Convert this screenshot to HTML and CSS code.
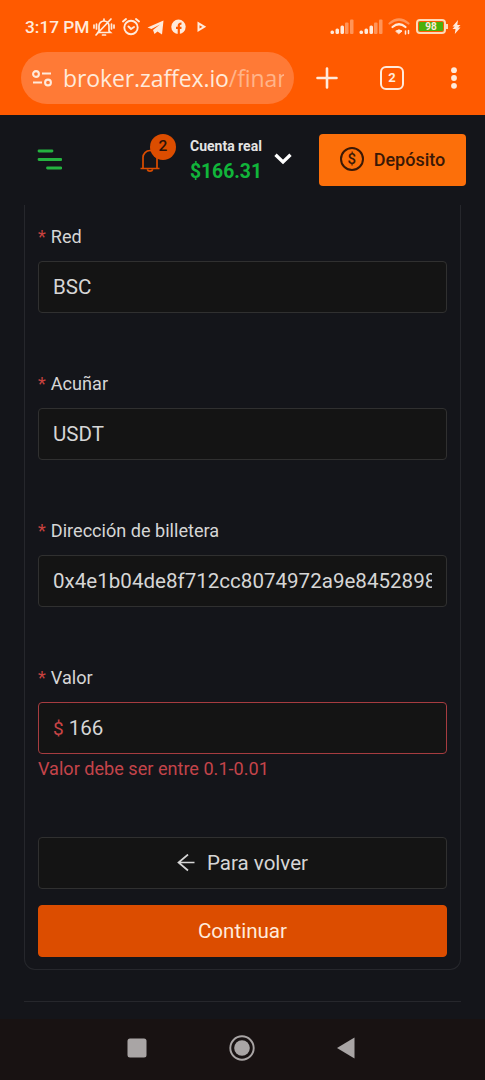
FILE: index.html
```
<!DOCTYPE html>
<html lang="es">
<head>
  <meta charset="UTF-8">
  <meta name="viewport" content="width=device-width, initial-scale=1.0">
  <title>Zaffex</title>
  <link rel="stylesheet" href="styles.css">
</head>
<body>
  <div class="browser">
    <div class="statusbar">
      <span class="time">3:17 PM</span>
      <div class="status-left">
        <svg width="22" height="20" viewBox="0 0 22 20" fill="none" stroke="currentColor" stroke-width="1.7" stroke-linecap="round">
          <path d="M6 14V9a5 5 0 0 1 10 0v5l1.500 1.500H5z M9.500 18h3 M11 2v2 M3 18L18 2 M3.500 7v5 M1 8v3 M18.500 7v5 M21 8v3"/>
        </svg>
        <svg width="18" height="20" viewBox="0 0 18 20" fill="none" stroke="currentColor" stroke-width="1.9" stroke-linecap="round">
          <circle cx="9" cy="10.500" r="6.700"/>
          <path d="M1 4.500l3-2.500 M17 4.500l-3-2.500 M6.500 9.500L9 12l3-2"/>
        </svg>
        <svg width="17" height="20" viewBox="0 0 17 20" fill="currentColor">
          <path d="M0.500 10.500L16.500 3.500l-1.500 14-4.500-3-3 2.500-1.500-4L13 7.500l-8.500 4.500z"/>
        </svg>
        <svg width="15" height="20" viewBox="0 0 15 20">
          <circle cx="7.500" cy="9.800" r="7.200" fill="currentColor"/>
          <path d="M7.800 17.500v-9q0-2 2.700-1.800 M5 10.800h5.500" fill="none" stroke="#ff5a00" stroke-width="2.200"/>
        </svg>
        <svg class="play" width="10" height="20" viewBox="0 0 10 20" fill="none" stroke="currentColor" stroke-width="2">
          <path d="M1.500 6.300v7L7.300 9.800z"/>
        </svg>
      </div>
      <div class="status-right">
        <svg width="24" height="20" viewBox="0 0 24 20" fill="currentColor">
          <rect x="0.500" y="13.500" width="3.500" height="3.500" rx="1.500"/>
          <rect x="5.500" y="11.500" width="3.500" height="5.500" rx="1.500"/>
          <rect x="10.500" y="8.500" width="3.500" height="8.500" rx="1.500"/>
          <rect class="dim" x="15" y="5.500" width="3.500" height="11.500" rx="1"/>
          <rect class="dim" x="20" y="2.500" width="3.500" height="14.500" rx="1"/>
        </svg>
        <svg width="24" height="20" viewBox="0 0 24 20" fill="currentColor">
          <rect x="0.500" y="13.500" width="3.500" height="3.500" rx="1.500"/>
          <rect x="5.500" y="11.500" width="3.500" height="5.500" rx="1.500"/>
          <rect x="10.500" y="8.500" width="3.500" height="8.500" rx="1.500"/>
          <rect class="dim" x="15" y="5.500" width="3.500" height="11.500" rx="1"/>
          <rect class="dim" x="20" y="2.500" width="3.500" height="14.500" rx="1"/>
        </svg>
        <svg width="22" height="20" viewBox="0 0 22 20" fill="none" stroke="currentColor" stroke-width="2.200" stroke-linecap="round">
          <path class="dim" d="M1.500 6.500q9.500-8 19 0"/>
          <path d="M4.500 10q6.500-5.500 13 0"/>
          <path d="M8 14q3-2.500 6 0l-3 2.500z" fill="currentColor" stroke-width="1"/>
          <path d="M17.500 14v3 M20.500 13.500v3" stroke-width="1.500"/>
        </svg>
        <div class="battery">98</div>
        <svg class="bolt" width="9" height="20" viewBox="0 0 9 20" fill="currentColor">
          <path d="M6 3L0.500 9.500h2.300L0.500 12h3l-0.700 5L8.500 10.500H6l2.500-2.500H5.300z"/>
        </svg>
      </div>
    </div>
    <div class="toolbar">
      <div class="urlbar">
        <svg width="20" height="18" viewBox="0 0 20 18" fill="none" stroke="currentColor" stroke-width="2.100">
          <circle cx="4" cy="5" r="2.900"/>
          <path d="M10 4.500h9 M1 13.500h9"/>
          <circle cx="16" cy="13.500" r="2.900"/>
        </svg>
        <div class="url">broker.zaffex.io<span class="path">/finance</span></div>
      </div>
      <svg class="plus" width="22" height="22" viewBox="0 0 22 22" stroke="currentColor" stroke-width="2.600" stroke-linecap="round">
        <path d="M11 1.500v19 M1.500 11h19"/>
      </svg>
      <div class="tabs">2</div>
      <svg class="dots" width="6" height="22" viewBox="0 0 6 22" fill="currentColor">
        <circle cx="3" cy="3.200" r="2.900"/>
        <circle cx="3" cy="11" r="2.900"/>
        <circle cx="3" cy="18.800" r="2.900"/>
      </svg>
    </div>
  </div>

  <header class="header">
    <svg class="menu" width="26" height="22" viewBox="0 0 26 22" stroke="currentColor" stroke-width="2.800" stroke-linecap="round">
      <path d="M3 2h13 M3 10.500h22 M11.500 19h13.500"/>
    </svg>
    <div class="bell">
      <svg width="20" height="26" viewBox="0 0 20 26" fill="none" stroke="currentColor" stroke-width="1.700">
        <path d="M0.500 21.500h19 M3 21.500V10.500a7 7 0 0 1 14 0v11 M7.300 22.500a2.800 2.300 0 0 0 5.400 0"/>
      </svg>
      <span class="badge">2</span>
    </div>
    <div class="account">
      <span class="account-name">Cuenta real</span>
      <span class="balance">$166.31</span>
    </div>
    <svg class="chevron" width="18" height="12" viewBox="0 0 18 12" fill="none" stroke="currentColor" stroke-width="3.300">
      <path d="M1.500 1.800L9 9l7.500-7.200"/>
    </svg>
    <button class="deposit">
      <span class="coin">$</span>
      Depósito
    </button>
  </header>

  <main class="main">
    <form class="card">
      <div class="field">
        <label for="network">Red</label>
        <input type="text" id="network" value="BSC">
      </div>
      <div class="field">
        <label for="coin">Acuñar</label>
        <input type="text" id="coin" value="USDT">
      </div>
      <div class="field">
        <label for="wallet">Dirección de billetera</label>
        <input type="text" id="wallet" value="0x4e1b04de8f712cc8074972a9e8452898">
      </div>
      <div class="field">
        <label for="amount">Valor</label>
        <div class="amount-box">
          <span class="currency">$</span>
          <input type="text" id="amount" value="166">
        </div>
        <p class="error">Valor debe ser entre 0.1-0.01</p>
      </div>
      <div class="actions">
        <button type="button" class="btn btn-back">
          <svg width="18" height="18" viewBox="0 0 18 18" fill="none" stroke="currentColor" stroke-width="1.700">
            <path d="M17.500 8.500H1.500 M11 0.500L1.500 8.500l9.500 8"/>
          </svg>
          Para volver
        </button>
        <button type="button" class="btn btn-next">Continuar</button>
      </div>
    </form>
    <hr class="divider">
  </main>

  <nav class="navbar">
    <svg width="20" height="20" viewBox="0 0 20 20" fill="currentColor">
      <rect x="0.500" y="0.500" width="19" height="19" rx="2.500"/>
    </svg>
    <svg width="26" height="26" viewBox="0 0 26 26">
      <circle cx="13" cy="13" r="11.700" fill="none" stroke="currentColor" stroke-width="1.900"/>
      <circle cx="13" cy="13" r="7.800" fill="currentColor"/>
    </svg>
    <svg width="18" height="22" viewBox="0 0 18 22" fill="currentColor">
      <path d="M17.500 0.500v21L0 11z"/>
    </svg>
  </nav>
</body>
</html>
```
FILE: styles.css
```
* {
  box-sizing: border-box;
}

body {
  margin: 0;
  height: 1080px;
  display: flex;
  flex-direction: column;
  overflow: hidden;
  background-color: #14151a;
  color: #d6d6d6;
  font-family: Roboto, sans-serif;
}

svg {
  display: block;
  flex-shrink: 0;
}

button,
input {
  font-family: inherit;
}

/* browser chrome */
.browser {
  height: 115px;
  background-color: #ff5a00;
  color: #ffeadb;
}

.statusbar {
  height: 52px;
  padding: 1px 24px 0 25px;
  display: flex;
  align-items: center;
}

.time {
  width: 68px;
  font-size: 17.3px;
  font-weight: 500;
  white-space: nowrap;
}

.status-left {
  display: flex;
  gap: 7px;
}

.play {
  margin-left: 4px;
}

.status-right {
  margin-left: auto;
  display: flex;
  align-items: center;
  gap: 5px;
}

.dim {
  opacity: 0.4;
}

.battery {
  position: relative;
  width: 30px;
  height: 15px;
  margin-left: 1px;
  margin-right: 1px;
  border: 2px solid #ffd9b8;
  border-radius: 4px;
  background-color: #4caf0a;
  box-shadow: inset 0 0 0 1px #ff5a00;
  font-size: 10px;
  font-weight: 700;
  line-height: 11px;
  text-align: center;
}

.battery::after {
  content: "";
  position: absolute;
  top: 3px;
  right: -4px;
  width: 2px;
  height: 5px;
  background-color: #ffd9b8;
}

.toolbar {
  display: flex;
  align-items: center;
  padding: 0 28px 0 21px;
}

.urlbar {
  width: 273px;
  height: 52px;
  padding: 0 10px 0 11px;
  display: flex;
  align-items: center;
  gap: 11px;
  border-radius: 26px;
  background-color: #ff7a36;
}

.url {
  flex: 1;
  overflow: hidden;
  white-space: nowrap;
  font-family: "Open Sans", sans-serif;
  font-size: 23px;
  letter-spacing: -0.1px;
}

.path {
  color: #ffb48a;
}

.plus {
  margin-left: 22px;
}

.tabs {
  width: 24px;
  height: 24px;
  margin-left: 42px;
  border: 2.5px solid #ffeadb;
  border-radius: 6px;
  font-size: 13px;
  font-weight: 700;
  line-height: 20px;
  text-align: center;
}

.dots {
  margin-left: auto;
}

/* header */
.header {
  height: 90px;
  padding: 0 19px 0 36px;
  display: flex;
  align-items: center;
}

.menu {
  color: #25b340;
}

.bell {
  position: relative;
  margin-left: 78px;
  color: #dc4d00;
}

.badge {
  position: absolute;
  top: -13px;
  left: 10px;
  width: 26px;
  height: 26px;
  border-radius: 50%;
  background-color: #dc4d00;
  color: #2a1208;
  font-size: 15.5px;
  font-weight: 500;
  line-height: 25px;
  text-align: center;
}

.account {
  width: 72px;
  margin-left: 30px;
  padding-top: 4px;
  display: flex;
  flex-direction: column;
  white-space: nowrap;
}

.account-name {
  color: #e4e4e4;
  font-size: 14px;
  font-weight: 700;
  line-height: 20px;
}

.balance {
  color: #11b53a;
  font-size: 19.3px;
  font-weight: 700;
  line-height: 32px;
}

.chevron {
  margin-left: 12px;
  margin-bottom: 3px;
  color: #fff;
}

.deposit {
  width: 147px;
  height: 52px;
  margin-left: auto;
  padding: 0 0 1px;
  display: flex;
  align-items: center;
  justify-content: center;
  gap: 10px;
  border: none;
  border-radius: 4px;
  background-color: #fc6f0a;
  color: #3a1806;
  font-size: 18px;
  font-weight: 500;
}

.coin {
  width: 24px;
  height: 24px;
  margin-bottom: 2px;
  border: 2px solid #3a1806;
  border-radius: 50%;
  font-size: 15px;
  line-height: 20px;
}

/* form */
.main {
  height: 814px;
  padding: 0 24px;
}

.card {
  height: 765px;
  padding: 18px 13px 0;
  border: 1px solid #26272c;
  border-top: none;
  border-radius: 0 0 11px 11px;
}

.field {
  height: 147px;
}

.field label {
  display: block;
  height: 38px;
  line-height: 27px;
  font-size: 18.1px;
}

.field label::before {
  content: "*";
  margin-right: 5px;
  color: #c8423f;
}

.field input {
  width: 100%;
  height: 52px;
  padding: 0 14px 1px;
  border: 1px solid #303030;
  border-radius: 4px;
  outline: none;
  background-color: #141414;
  color: #d6d6d6;
  font-size: 20.57px;
}

.amount-box {
  height: 52px;
  padding-left: 14px;
  display: flex;
  align-items: center;
  gap: 5px;
  border: 1px solid #a63c40;
  border-radius: 4px;
  background-color: #141414;
}

.currency {
  color: #c94446;
  font-size: 19px;
}

.field .amount-box input {
  height: 48px;
  padding: 0;
  border: none;
}

.error {
  margin: 0;
  color: #c4444a;
  font-size: 18.1px;
  line-height: 29px;
}

.actions {
  margin-top: 26px;
  display: flex;
  flex-direction: column;
  gap: 16px;
}

.btn {
  height: 52px;
  padding: 0;
  display: flex;
  align-items: center;
  justify-content: center;
  gap: 12px;
  border: 1px solid #303030;
  border-radius: 4px;
  background-color: #141414;
  color: #d6d6d6;
  font-size: 20.57px;
}

.btn-next {
  padding-bottom: 1px;
  border-color: #dc4d00;
  background-color: #dc4d00;
  color: #ffeadb;
}

.divider {
  margin: 31px 0 0;
  border: none;
  border-top: 1px solid #26272c;
}

/* android navigation */
.navbar {
  flex: 1;
  padding: 0 130px 3px 127px;
  display: flex;
  align-items: center;
  justify-content: space-between;
  background-color: #181212;
  color: #a9a5a5;
}
```
